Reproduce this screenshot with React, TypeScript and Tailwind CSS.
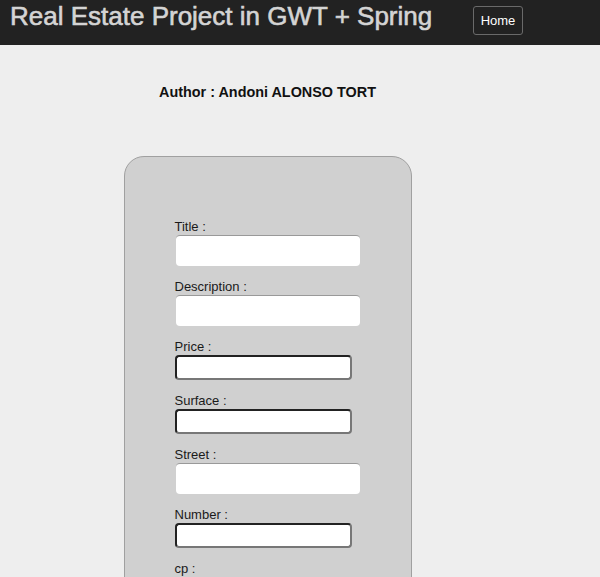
import React from "react";

type Field = { label: string; kind: "white" | "dark" };

const fields: Field[] = [
  { label: "Title :", kind: "white" },
  { label: "Description :", kind: "white" },
  { label: "Price :", kind: "dark" },
  { label: "Surface :", kind: "dark" },
  { label: "Street :", kind: "white" },
  { label: "Number :", kind: "dark" },
  { label: "cp :", kind: "dark" },
  { label: "City :", kind: "white" },
];

export default function App() {
  return (
    <div
      className="h-[577px] w-full overflow-hidden bg-[#eeeeee]"
      style={{ fontFamily: '"Liberation Sans", Arial, sans-serif' }}
    >
      <header className="flex h-[45px] items-start bg-[#222222]">
        <div className="w-[473px] shrink-0 pl-[10px] pt-[1px]">
          <h1 className="whitespace-nowrap text-[26px] leading-[30px] text-[#d4d4d4] [-webkit-text-stroke:0.6px_#d4d4d4]">
            Real Estate Project in GWT + Spring
          </h1>
        </div>
        <button className="mt-[6px] flex h-[29px] w-[50px] items-center justify-center rounded-[3px] border border-[#6a6a6a] text-[13px] text-white">
          Home
        </button>
      </header>
      <main className="flex w-[535px] flex-col items-center">
        <p className="mt-[39px] text-[14.4px] font-bold leading-[17px] text-[#111111]">
          Author : Andoni ALONSO TORT
        </p>
        <div className="mt-[55px] w-[288px] rounded-t-[20px] border border-[#a0a0a0] bg-[#d0d0d0] pb-10 pl-[50px] pt-[62px]">
          {fields.map((f) => (
            <div key={f.label} className="mb-[13px] flex flex-col items-start">
              <label className="text-[13px] leading-[16px] text-[#1a1a1a]">{f.label}</label>
              {f.kind === "white" ? (
                <input
                  type="text"
                  className="ml-px h-[31px] w-[184px] rounded-[4px] border-0 border-t border-t-[#999999] bg-white outline-none"
                />
              ) : (
                <input
                  type="text"
                  className="h-[25px] w-[177px] rounded-[4px] border-2 border-b-[#777777] border-l-[#222222] border-r-[#777777] border-t-[#222222] bg-white outline-none"
                />
              )}
            </div>
          ))}
        </div>
      </main>
    </div>
  );
}
